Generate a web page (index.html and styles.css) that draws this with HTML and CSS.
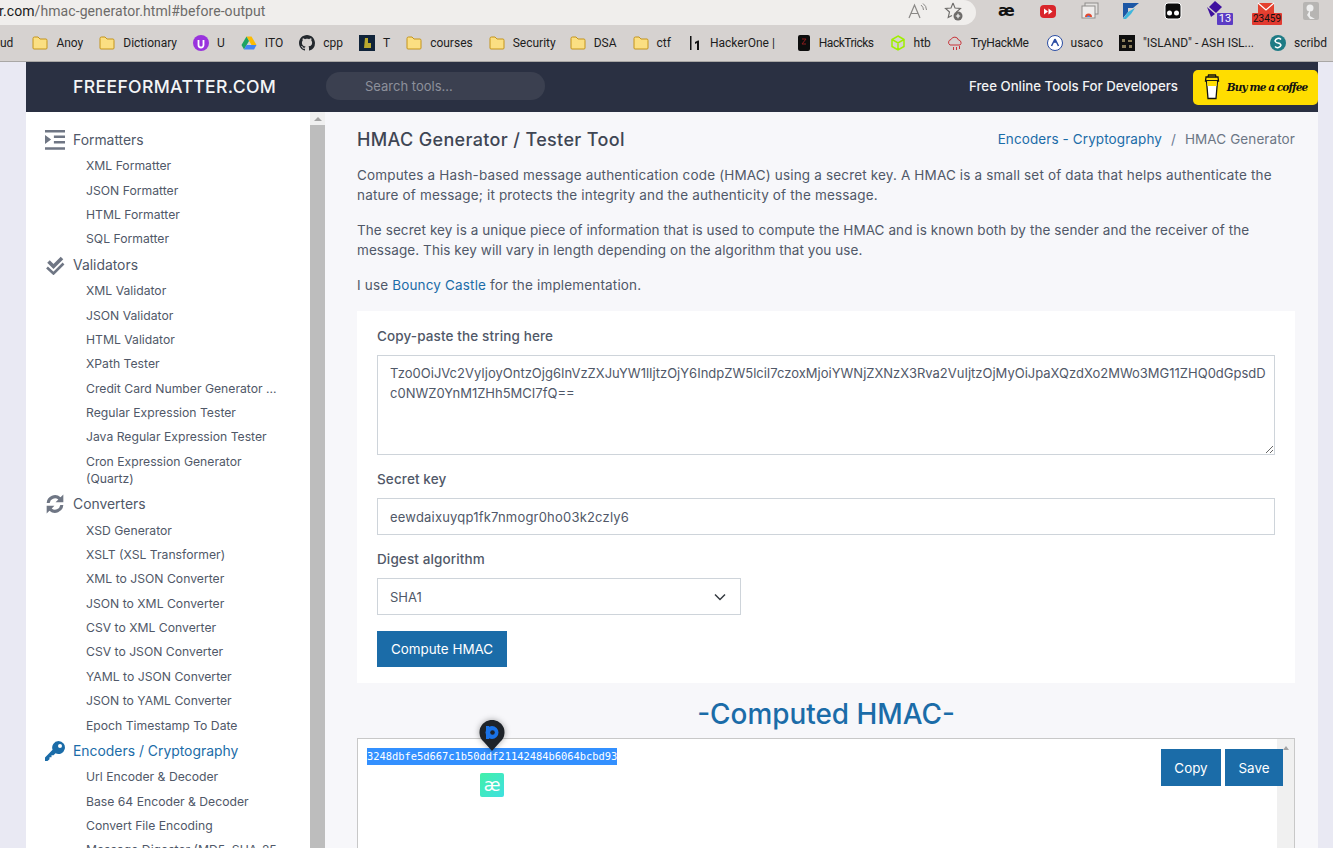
FILE: index.html
```html
<!DOCTYPE html>
<html>
<head>
    <meta charset="utf-8">
    <title>HMAC Generator</title>
    <link rel="stylesheet" href="styles.css">
</head>
<body>
    <!-- browser chrome -->
    <div class="toolbar">
        <div class="address">
            <span class="url"><span class="host">r.com</span>/hmac-generator.html#before-output</span>
            <svg class="addr-icon" width="20" height="18" viewBox="0 0 20 18"><path d="M1 16 L6.5 3 L12 16 M3 11.5 H10" fill="none" stroke="#8a8886" stroke-width="1.2"/><path d="M13 3 Q15.5 5 15.5 8 M15 1.5 Q18.5 4 18.5 8" fill="none" stroke="#8a8886" stroke-width="1"/></svg>
            <svg class="addr-icon star" width="20" height="20" viewBox="0 0 20 20"><path d="M9 2 L11 7 L16.5 7.5 L12.5 11 L13 14 M9 2 L7 7 L1.5 7.5 L5.5 11 L4.2 16.5 L8 14.5" fill="none" stroke="#6d6b69" stroke-width="1.1"/><circle cx="14" cy="15" r="4.5" fill="#6d6b69"/><path d="M11.8 15 H16.2 M14 12.8 V17.2" stroke="#fff" stroke-width="1.1"/></svg>
        </div>
        <div class="extensions">
            <span class="ext-ae">æ</span>
            <svg width="18" height="18" viewBox="0 0 18 18"><rect x="1" y="3" width="16" height="13" rx="4" fill="#d9252a"/><path d="M5 6.5 L9 9.5 L5 12.5 Z M9.5 6.5 L13.5 9.5 L9.5 12.5 Z" fill="#fff"/></svg>
            <svg width="18" height="18" viewBox="0 0 18 18"><rect x="4" y="1" width="13" height="11" fill="#e3e1df" stroke="#8f8d8b"/><rect x="1" y="4" width="13" height="12" fill="#eeeceb" stroke="#8f8d8b"/><path d="M4 15 A3.5 3.5 0 0 1 11 15 Z" fill="#e2492f"/><path d="M6 15 A1.5 1.5 0 0 1 9 15 Z" fill="#4285f4"/></svg>
            <svg width="18" height="20" viewBox="0 0 18 20"><path d="M1 2 H17 L11 7 H6 V11 L1 17 Z" fill="#1c57a5"/><path d="M6 11 L13 7 L9 13 L4 18 H1 Z" fill="#3fb6dd"/></svg>
            <svg width="18" height="18" viewBox="0 0 18 18"><rect x="1" y="1" width="16" height="16" rx="3" fill="#0b0b0b" stroke="#fff"/><circle cx="5.5" cy="11" r="2.5" fill="#fff"/><circle cx="12.5" cy="11" r="2.5" fill="#fff"/></svg>
            <span class="ext-badge-wrap">
                <svg width="20" height="20" viewBox="0 0 20 20"><path d="M9 1 L16 7 L10 13 L3 7 Z" fill="#3e109f"/><path d="M1 7 L9 14 L5 17 Z" fill="#3e109f"/></svg>
                <span class="ext-count purple">13</span>
            </span>
            <span class="ext-badge-wrap">
                <svg width="24" height="14" viewBox="0 0 24 14"><rect x="4" y="1" width="16" height="11" fill="#e4412f"/><path d="M4 1 L12 8 L20 1" fill="none" stroke="#fff" stroke-width="1.2"/></svg>
                <span class="ext-count red">23459</span>
            </span>
            <svg width="18" height="20" viewBox="0 0 18 20"><rect x="1" y="1" width="16" height="18" rx="2" fill="#b7b5b3"/><circle cx="8" cy="7" r="3.5" fill="#eee"/><path d="M8 9 V15 L13 18 H8 L5 14 Z" fill="#eee"/></svg>
        </div>
    </div>

    <div class="bookmarks">
        <span class="mark cut">ud</span>
        <span class="mark"><svg class="folder" viewBox="0 0 16 16"><path d="M1 3.5 Q1 2 2.5 2 H6 L8 4 H14 Q15 4 15 5.5 V13 Q15 14 14 14 H2 Q1 14 1 13 Z" fill="#fbdf82" stroke="#c4941a"/></svg>Anoy</span>
        <span class="mark"><svg class="folder" viewBox="0 0 16 16"><path d="M1 3.5 Q1 2 2.5 2 H6 L8 4 H14 Q15 4 15 5.5 V13 Q15 14 14 14 H2 Q1 14 1 13 Z" fill="#fbdf82" stroke="#c4941a"/></svg>Dictionary</span>
        <span class="mark"><svg class="folder" viewBox="0 0 16 16"><circle cx="8" cy="8" r="8" fill="#9933dd"/><path d="M5.5 5 V10 A2.5 2.5 0 0 0 10.5 10 V5" fill="none" stroke="#fff" stroke-width="1.8"/></svg>U</span>
        <span class="mark"><svg class="folder" viewBox="0 0 16 16"><path d="M5.5 1.5 H10.5 L15.5 10 H10.5 Z" fill="#fbbc04"/><path d="M5.5 1.5 L0.5 10 L3 14.5 L8 6 Z" fill="#1ea362"/><path d="M3 14.5 H13 L15.5 10 H5.5 Z" fill="#4285f4"/></svg>ITO</span>
        <span class="mark"><svg class="folder" viewBox="0 0 16 16"><path d="M8 0C3.58 0 0 3.58 0 8c0 3.54 2.29 6.53 5.47 7.59.4.07.55-.17.55-.38 0-.19-.01-.82-.01-1.49-2.01.37-2.53-.49-2.69-.94-.09-.23-.48-.94-.82-1.13-.28-.15-.68-.52-.01-.53.63-.01 1.08.58 1.23.82.72 1.21 1.87.87 2.33.66.07-.52.28-.87.51-1.07-1.78-.2-3.64-.89-3.64-3.95 0-.87.31-1.59.82-2.15-.08-.2-.36-1.02.08-2.12 0 0 .67-.21 2.2.82.64-.18 1.32-.27 2-.27s1.36.09 2 .27c1.53-1.04 2.2-.82 2.2-.82.44 1.1.16 1.92.08 2.12.51.56.82 1.27.82 2.15 0 3.07-1.87 3.75-3.65 3.95.29.25.54.73.54 1.48 0 1.07-.01 1.93-.01 2.2 0 .21.15.46.55.38A8.01 8.01 0 0 0 16 8c0-4.42-3.58-8-8-8z" fill="#24292e"/></svg>cpp</span>
        <span class="mark"><svg class="folder" viewBox="0 0 16 16"><rect width="16" height="16" fill="#10243a"/><path d="M6 3 H9 V8 H12 V13 H5 Z" fill="#b9a92f"/></svg>T</span>
        <span class="mark"><svg class="folder" viewBox="0 0 16 16"><path d="M1 3.5 Q1 2 2.5 2 H6 L8 4 H14 Q15 4 15 5.5 V13 Q15 14 14 14 H2 Q1 14 1 13 Z" fill="#fbdf82" stroke="#c4941a"/></svg>courses</span>
        <span class="mark"><svg class="folder" viewBox="0 0 16 16"><path d="M1 3.5 Q1 2 2.5 2 H6 L8 4 H14 Q15 4 15 5.5 V13 Q15 14 14 14 H2 Q1 14 1 13 Z" fill="#fbdf82" stroke="#c4941a"/></svg>Security</span>
        <span class="mark dsa"><svg class="folder" viewBox="0 0 16 16"><path d="M1 3.5 Q1 2 2.5 2 H6 L8 4 H14 Q15 4 15 5.5 V13 Q15 14 14 14 H2 Q1 14 1 13 Z" fill="#fbdf82" stroke="#c4941a"/></svg>DSA</span>
        <span class="mark"><svg class="folder" viewBox="0 0 16 16"><path d="M1 3.5 Q1 2 2.5 2 H6 L8 4 H14 Q15 4 15 5.5 V13 Q15 14 14 14 H2 Q1 14 1 13 Z" fill="#fbdf82" stroke="#c4941a"/></svg>ctf</span>
        <span class="mark one"><svg class="folder" viewBox="0 0 16 16"><path d="M3 1 V15 H4.5 V1 Z M8 7 L11 5.5 H12 V15 H10 V8 L8 9 Z" fill="#111"/></svg>HackerOne |</span>
        <span class="mark tight tricks"><svg class="folder" viewBox="0 0 16 16"><rect x="2" y="0" width="12" height="16" rx="2" fill="#0d0d0d"/><path d="M6 4 H10 L6 9 H10" fill="none" stroke="#8d1c1c"/></svg>HackTricks</span>
        <span class="mark"><svg class="folder" viewBox="0 0 16 16"><path d="M8 1 L14 4.5 V11.5 L8 15 L2 11.5 V4.5 Z M2 4.5 L8 8 L14 4.5 M8 8 V15" fill="none" stroke="#9fef00" stroke-width="1.5"/></svg>htb</span>
        <span class="mark tight thm"><svg class="folder" viewBox="0 0 16 16"><path d="M3 10 A3 3 0 0 1 4 4.5 A4 4 0 0 1 11.5 5 A2.8 2.8 0 0 1 13 10 Z" fill="none" stroke="#c8343a"/><path d="M6 12 h1 v3 h-1 z M9 12 h1 v3 h-1 z M12 11 h1 v3 h-1 z" fill="#c8343a"/></svg>TryHackMe</span>
        <span class="mark"><svg class="folder" viewBox="0 0 16 16"><circle cx="8" cy="8" r="7.5" fill="#fff" stroke="#2b4da3"/><path d="M8 4 L4.5 11 M8 4 L11.5 11 M8 4 V8" stroke="#2b4da3" stroke-width="1.5"/></svg>usaco</span>
        <span class="mark"><svg class="folder" viewBox="0 0 16 16"><rect width="16" height="16" fill="#0f0f0f"/><path d="M3 4 h3 v3 h-3 z M9 5 h4 v2 h-4 z M3 10 h4 v3 h-4 z M10 10 h3 v3 h-3 z" fill="#8a7d5a"/></svg>"ISLAND" - ASH ISL...</span>
        <span class="mark"><svg class="folder" viewBox="0 0 16 16"><circle cx="8" cy="8" r="8" fill="#1e7b85"/><path d="M11 4.5 A3.5 3.5 0 0 0 5 6 Q6 8 8 8 Q10 8 11 10 A3.5 3.5 0 0 1 5 11.5" fill="none" stroke="#fff" stroke-width="1.5"/></svg>scribd</span>
    </div>

    <div class="page">
        <div class="gutter"></div>
        <div class="site">
            <div class="navbar">
                <a class="brand">FREEFORMATTER.COM</a>
                <div class="search">Search tools...</div>
                <div class="tagline">Free Online Tools For Developers</div>
                <a class="coffee">
                    <svg width="16" height="26" viewBox="0 0 16 26"><path d="M2 3 H14 L14.5 7 H1.5 Z" fill="#ffdd00" stroke="#111" stroke-width="1.3"/><path d="M4 3 L4.5 1 H11.5 L12 3" fill="none" stroke="#111" stroke-width="1.3"/><path d="M2.5 7 L4 24.5 H12 L13.5 7 Z" fill="#fff" stroke="#111" stroke-width="1.3"/><path d="M3 7 L3.5 12 H12.5 L13 7 Z" fill="#ffdd00"/></svg>
                    <span class="coffee-text">Buy me a coffee</span>
                </a>
            </div>
            <div class="site-body">
                <div class="sidebar">
                    <div class="nav-head">
                        <svg class="nav-icon" viewBox="0 0 18 18"><path d="M0 0 H18 V2.2 H0 Z M8 5 H18 V7.2 H8 Z M8 10 H18 V12.2 H8 Z M0 15.5 H18 V17.7 H0 Z M0 4.5 L5.5 8.5 L0 12.5 Z" fill="#6f7684"/></svg>
                        Formatters
                    </div>
                    <div class="nav-item">XML Formatter</div>
                    <div class="nav-item">JSON Formatter</div>
                    <div class="nav-item">HTML Formatter</div>
                    <div class="nav-item">SQL Formatter</div>
                    <div class="nav-head">
                        <svg class="nav-icon" viewBox="0 0 20 20"><path d="M3.5 6.5 L8.5 11.5 L17 3" fill="none" stroke="#6f7684" stroke-width="3.6"/><path d="M2 12.5 L8.5 18.5 L18.5 8.5" fill="none" stroke="#6f7684" stroke-width="2.6"/></svg>
                        Validators
                    </div>
                    <div class="nav-item">XML Validator</div>
                    <div class="nav-item">JSON Validator</div>
                    <div class="nav-item">HTML Validator</div>
                    <div class="nav-item">XPath Tester</div>
                    <div class="nav-item">Credit Card Number Generator ...</div>
                    <div class="nav-item">Regular Expression Tester</div>
                    <div class="nav-item">Java Regular Expression Tester</div>
                    <div class="nav-item">Cron Expression Generator<br>(Quartz)</div>
                    <div class="nav-head">
                        <svg class="nav-icon" viewBox="1.5 1 17 18"><path d="M2.5 9 A7.5 7.5 0 0 1 15 4 L17.5 1.5 V8.5 H10.5 L13 6 A4.8 4.8 0 0 0 5.2 9 Z" fill="#6f7684"/><path d="M17.5 11 A7.5 7.5 0 0 1 5 16 L2.5 18.5 V11.5 H9.5 L7 14 A4.8 4.8 0 0 0 14.8 11 Z" fill="#6f7684"/></svg>
                        Converters
                    </div>
                    <div class="nav-item">XSD Generator</div>
                    <div class="nav-item">XSLT (XSL Transformer)</div>
                    <div class="nav-item">XML to JSON Converter</div>
                    <div class="nav-item">JSON to XML Converter</div>
                    <div class="nav-item">CSV to XML Converter</div>
                    <div class="nav-item">CSV to JSON Converter</div>
                    <div class="nav-item">YAML to JSON Converter</div>
                    <div class="nav-item">JSON to YAML Converter</div>
                    <div class="nav-item">Epoch Timestamp To Date</div>
                    <div class="nav-head current">
                        <svg class="nav-icon" viewBox="0 0 20 20"><path d="M13.5 0 A6.5 6.5 0 1 1 10.5 12.3 L8.5 14.3 H6.5 V16.3 H4.5 V18.3 L2.5 20 H0 V16.5 L7.6 8.8 A6.5 6.5 0 0 1 13.5 0 Z M15 3 A2 2 0 1 0 15 7 A2 2 0 1 0 15 3 Z" fill="#1b6ca8" fill-rule="evenodd"/></svg>
                        Encoders / Cryptography
                    </div>
                    <div class="nav-item">Url Encoder &amp; Decoder</div>
                    <div class="nav-item">Base 64 Encoder &amp; Decoder</div>
                    <div class="nav-item">Convert File Encoding</div>
                    <div class="nav-item">Message Digester (MD5, SHA-25</div>
                </div>
                <div class="side-scroll">
                    <div class="scroll-arrow"></div>
                    <div class="scroll-thumb"></div>
                </div>
                <div class="main">
                    <div class="title-row">
                        <h1 class="title">HMAC Generator / Tester Tool</h1>
                        <div class="crumbs"><a>Encoders - Cryptography</a><span class="sep">/</span><span class="crumb-now">HMAC Generator</span></div>
                    </div>
                    <p class="para">Computes a Hash-based message authentication code (HMAC) using a secret key. A HMAC is a small set of data that helps authenticate the<br>nature of message; it protects the integrity and the authenticity of the message.</p>
                    <p class="para narrow">The secret key is a unique piece of information that is used to compute the HMAC and is known both by the sender and the receiver of the<br>message. This key will vary in length depending on the algorithm that you use.</p>
                    <p class="para">I use <a>Bouncy Castle</a> for the implementation.</p>

                    <div class="card">
                        <label class="field-label">Copy-paste the string here</label>
                        <textarea class="field text-area" spellcheck="false">Tzo0OiJVc2VyIjoyOntzOjg6InVzZXJuYW1lIjtzOjY6IndpZW5lciI7czoxMjoiYWNjZXNzX3Rva2VuIjtzOjMyOiJpaXQzdXo2MWo3MG11ZHQ0dGpsdD
c0NWZ0YnM1ZHh5MCI7fQ==</textarea>
                        <label class="field-label">Secret key</label>
                        <input class="field text-input" type="text" value="eewdaixuyqp1fk7nmogr0ho03k2czly6">
                        <label class="field-label">Digest algorithm</label>
                        <div class="select-wrap">
                            <select class="field text-input select">
                                <option>SHA1</option>
                            </select>
                            <svg class="chevron" width="12" height="8" viewBox="0 0 12 8"><path d="M1 1.5 L6 6.5 L11 1.5" fill="none" stroke="#343a40" stroke-width="1.5"/></svg>
                        </div>
                        <div><button class="btn compute">Compute HMAC</button></div>
                    </div>

                    <h2 class="computed">-Computed HMAC-</h2>
                    <div class="output">
                        <div class="output-text"><span class="selected">3248dbfe5d667c1b50ddf21142484b6064bcbd93</span></div>
                        <div class="output-btns">
                            <button class="btn small copy">Copy</button>
                            <button class="btn small">Save</button>
                        </div>
                        <div class="output-scroll"><div class="output-arrow"></div></div>

                        <div class="float-pin">
                            <svg width="26" height="32" viewBox="0 0 26 32"><path d="M13 31 L5 22 A12.5 12.5 0 1 1 21 22 Z" fill="#1e2329"/><circle cx="13" cy="12.5" r="6.5" fill="#1a73e8"/><path d="M7 6 H10 V19 H7 Z" fill="#1a73e8"/><circle cx="13.5" cy="12.5" r="2.3" fill="#1e2329"/></svg>
                        </div>
                        <div class="float-ae">æ</div>
                    </div>
                </div>
            </div>
        </div>
        <div class="gutter right"></div>
    </div>
</body>
</html>
```
FILE: styles.css
```css
* {
    box-sizing: border-box;
}

html, body {
    height: 100%;
}

body {
    margin: 0;
    overflow: hidden;
    background: #e9e9f3;
    font-family: "Inter", "Liberation Sans", sans-serif;
    color: #505868;
}

a {
    color: #1b6ca8;
    text-decoration: none;
}

/* browser chrome */
.toolbar {
    display: flex;
    height: 25px;
    background: #d6d2d0;
}

.address {
    display: flex;
    align-items: center;
    width: 976px;
    height: 25px;
    padding: 0 12px 4px 0;
    background: #f0eeec;
    border-radius: 0 13px 13px 0;
}

.url {
    flex: 1;
    margin-left: -1px;
    font-family: "Roboto", sans-serif;
    font-size: 14px;
    letter-spacing: 0.08px;
    color: #6d6b69;
    white-space: nowrap;
}

.host {
    color: #1a1a1a;
}

.addr-icon {
    margin-left: 16px;
}

.extensions {
    flex: 1;
    display: flex;
    align-items: center;
    justify-content: space-between;
    padding: 0 13px 4px 22px;
}

.ext-ae {
    font-family: "DejaVu Sans", sans-serif;
    font-size: 16px;
    font-weight: 700;
    color: #111;
}

.ext-badge-wrap {
    position: relative;
    display: block;
    align-self: flex-start;
    width: 24px;
    height: 25px;
}

.ext-count {
    position: absolute;
    right: -3px;
    bottom: 0;
    padding: 0 2px;
    font-family: "Roboto", sans-serif;
    font-size: 11px;
    line-height: 12px;
    border-radius: 1px;
}

.ext-count.purple {
    background: #5b3cc4;
    color: #fff;
}

.ext-count.red {
    right: -4px;
    padding: 0 1px;
    background: #e23a30;
    font-size: 10px;
    color: #111;
}

.bookmarks {
    display: flex;
    align-items: center;
    gap: 16px;
    height: 37px;
    overflow: hidden;
    background: #d6d2d0;
    border-bottom: 1px solid #a9a7a5;
}

.mark {
    display: flex;
    align-items: center;
    flex: none;
    gap: 8px;
    font-family: "Roboto", sans-serif;
    font-size: 12px;
    color: #1d1d1d;
    white-space: nowrap;
}

.mark.cut {
    margin-right: 3px;
}

.mark.dsa {
    margin-left: -2px;
}

.mark.one {
    gap: 7px;
    margin-right: 3px;
}

.mark.tight {
    letter-spacing: -0.35px;
}

.mark.tricks {
    margin-left: 2px;
    gap: 7px;
    letter-spacing: -0.5px;
}

.mark.thm {
    margin-right: 2px;
}

.folder {
    display: block;
    width: 16px;
    height: 16px;
}

/* page */
.page {
    display: flex;
    height: 786px;
    overflow: hidden;
}

.gutter {
    flex: none;
    width: 26px;
    background: #e9e9f3;
}

.gutter.right {
    width: 15px;
}

.site {
    flex: 1;
    min-width: 0;
}

.navbar {
    display: flex;
    align-items: center;
    height: 50px;
    padding: 0 0 2px 47px;
    background: #2a3042;
}

.brand {
    width: 253px;
    font-size: 17.6px;
    font-weight: 500;
    letter-spacing: 0.35px;
    color: #f4f5f7;
}

.search {
    width: 219px;
    height: 28px;
    padding-left: 39px;
    border-radius: 14px;
    background: #3b4050;
    font-size: 13px;
    line-height: 28px;
    color: #8d909b;
}

.tagline {
    margin-left: auto;
    font-size: 13.25px;
    font-weight: 500;
    color: #f2f3f5;
}

.coffee {
    display: flex;
    align-items: center;
    justify-content: center;
    gap: 7px;
    width: 125px;
    height: 35px;
    margin: 2px 0 0 15px;
    border-radius: 5px;
    background: #ffdd00;
}

.coffee-text {
    font-family: "DejaVu Serif", serif;
    font-style: italic;
    font-weight: 700;
    font-size: 10.5px;
    letter-spacing: -0.9px;
    color: #111;
}

.site-body {
    display: flex;
    height: 736px;
    overflow: hidden;
}

/* sidebar */
.sidebar {
    flex: none;
    width: 284px;
    padding: 14.3px 0 0 19px;
    overflow: hidden;
    background: #fff;
}

.nav-head {
    display: flex;
    align-items: center;
    height: 26px;
    margin: 0.7px 0;
    font-size: 13.9px;
    color: #505868;
}

.nav-head.current {
    color: #1b6ca8;
}

.nav-icon {
    flex: none;
    width: 20px;
    height: 20px;
    margin-right: 8px;
}

.nav-item {
    padding: 3.7px 0 3.7px 41px;
    font-size: 12.2px;
    line-height: 17px;
    white-space: nowrap;
}

.side-scroll {
    flex: none;
    width: 15px;
    background: #f0f0f0;
    display: flex;
    flex-direction: column;
    align-items: center;
}

.scroll-arrow {
    width: 0;
    height: 0;
    margin: 5px 0 4px;
    border: 4px solid transparent;
    border-top: 0;
    border-bottom: 4px solid #a3a3a3;
}

.scroll-thumb {
    flex: 1;
    width: 100%;
    background: #bdbdbd;
}

/* main column */
.main {
    flex: 1;
    min-width: 0;
    padding: 15px 23px 0 32px;
    background: #f7f7fa;
}

.title-row {
    display: flex;
    align-items: center;
    justify-content: space-between;
    height: 24px;
    margin-bottom: 14px;
}

.title {
    margin: 0;
    font-size: 18px;
    font-weight: 500;
    letter-spacing: 0.35px;
    color: #3f4654;
}

.crumbs {
    font-size: 13.5px;
    letter-spacing: 0.1px;
}

.sep {
    margin: 0 9px;
    color: #6c7a92;
}

.crumb-now {
    color: #6c7685;
}

.para {
    margin: 0 0 15px;
    font-size: 13.5px;
    letter-spacing: 0.16px;
    line-height: 20px;
    color: #505868;
    white-space: nowrap;
}

.para.narrow {
    letter-spacing: 0.08px;
}

.card {
    height: 372px;
    margin-top: 16px;
    padding: 16px 20px 0;
    background: #fff;
}

.field-label {
    display: block;
    margin-bottom: 10px;
    font-size: 13.5px;
    font-weight: 500;
    letter-spacing: 0.12px;
    line-height: 18px;
    color: #505868;
}

.field {
    display: block;
    width: 100%;
    border: 1px solid #ced4da;
    border-radius: 0;
    background: #fff;
    font-family: "Inter", "Liberation Sans", sans-serif;
    font-size: 13px;
    color: #505868;
}

.text-area {
    height: 100px;
    margin-bottom: 15px;
    padding: 7px 12px;
    line-height: 20px;
    white-space: pre;
    overflow: hidden;
}

.text-input {
    height: 37px;
    margin-bottom: 15px;
    padding: 0 12px;
    letter-spacing: 0.2px;
}

.select {
    appearance: none;
    letter-spacing: 0;
}

.select-wrap {
    position: relative;
    width: 364px;
}

.chevron {
    position: absolute;
    top: 15px;
    right: 15px;
}

.btn {
    border: none;
    background: #1b6ca8;
    color: #fff;
    font-family: "Inter", "Liberation Sans", sans-serif;
    font-size: 13.4px;
}

.compute {
    width: 130px;
    height: 36px;
    margin-top: 1px;
}

.computed {
    margin: 14px 0 6px;
    text-align: center;
    font-size: 27.9px;
    font-weight: 500;
    line-height: 35px;
    color: #1b6ca8;
}

.output {
    position: relative;
    display: flex;
    height: 200px;
    padding: 9px 0 0 9px;
    background: #fff;
    border: 1px solid #c8c8c8;
}

.output-text {
    flex: 1;
    font-family: "DejaVu Sans Mono", monospace;
    font-size: 10.4px;
    line-height: 17px;
}

.selected {
    display: inline-block;
    background: #3390ff;
    color: #fff;
}

.output-btns {
    display: flex;
    gap: 4px;
    height: 37px;
    margin: 1px -6px 0 0;
    position: relative;
}

.btn.small {
    width: 58px;
    height: 37px;
}

.btn.copy {
    width: 60px;
}

.output-scroll {
    flex: none;
    width: 17px;
    margin-top: -9px;
    background: #f0f0f0;
}

.output-arrow {
    width: 0;
    height: 0;
    margin: 7px auto 0;
    border: 3px solid transparent;
    border-top: 0;
    border-bottom: 4px solid #a3a3a3;
}

/* floating extension widgets over the output */
.float-pin {
    position: absolute;
    top: -19px;
    left: 121px;
    filter: drop-shadow(0 0 3px rgba(0, 0, 0, 0.35));
}

.float-ae {
    position: absolute;
    top: 34px;
    left: 122px;
    width: 24px;
    height: 24px;
    border-radius: 2px;
    background: linear-gradient(135deg, #41f0a8, #3fe0e0);
    color: #fff;
    font-family: "DejaVu Sans", sans-serif;
    font-size: 17px;
    line-height: 24px;
    text-align: center;
}
```
